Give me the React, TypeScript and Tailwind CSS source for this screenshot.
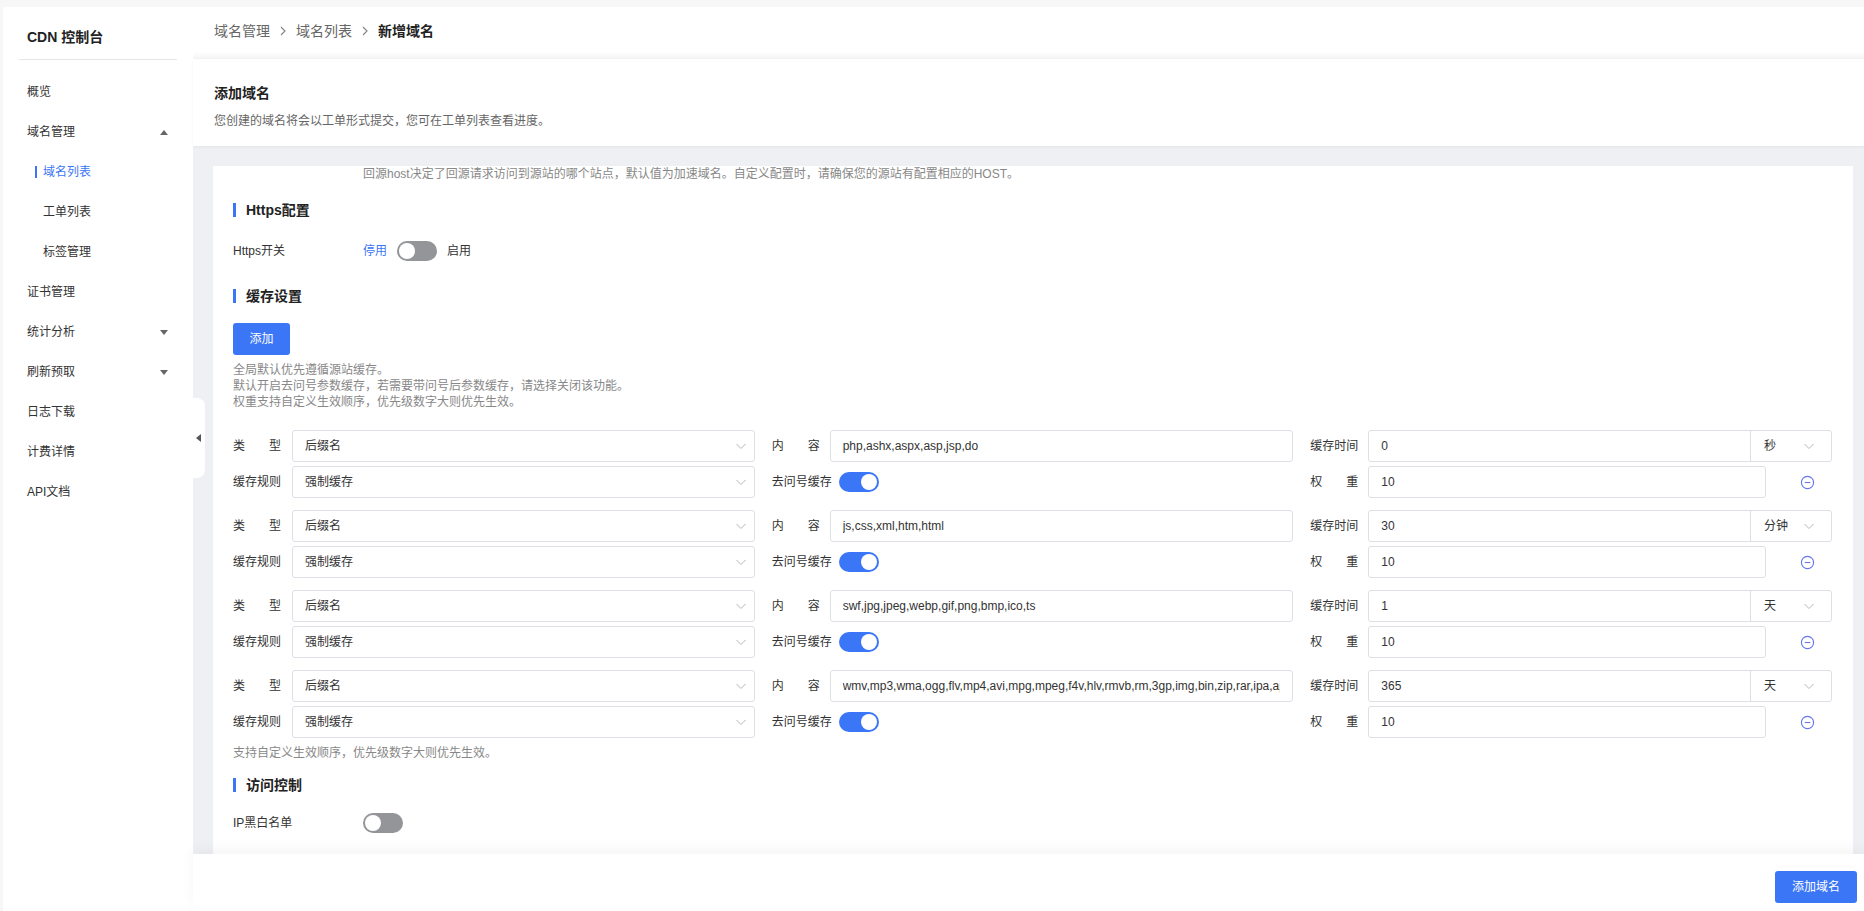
import React from 'react';

const rules = [
  { content: 'php,ashx,aspx,asp,jsp,do', time: '0', unit: '秒' },
  { content: 'js,css,xml,htm,html', time: '30', unit: '分钟' },
  { content: 'swf,jpg,jpeg,webp,gif,png,bmp,ico,ts', time: '1', unit: '天' },
  {
    content:
      'wmv,mp3,wma,ogg,flv,mp4,avi,mpg,mpeg,f4v,hlv,rmvb,rm,3gp,img,bin,zip,rar,ipa,apk,sis,xap,msi,exe,cab,7z,pdf,doc,docx,xls,xlsx,ppt,pptx,txt',
    time: '365',
    unit: '天',
  },
];

const Chevron = () => (
  <svg width="12" height="12" viewBox="0 0 12 12" className="shrink-0">
    <polyline points="1.5,4 6,8.5 10.5,4" fill="none" stroke="#b4b7bd" strokeWidth="1" />
  </svg>
);

const Caret = ({ up }: { up?: boolean }) => (
  <svg width="8" height="5" viewBox="0 0 8 5">
    <polygon points={up ? '0,5 8,5 4,0' : '0,0 8,0 4,5'} fill="#666" />
  </svg>
);

const SplitLabel = ({ a, b }: { a: string; b: string }) => (
  <div className="flex w-[48px] shrink-0 justify-between">
    <span>{a}</span>
    <span>{b}</span>
  </div>
);

const Switch = ({ on }: { on?: boolean }) => (
  <div
    className={
      on
        ? 'flex h-5 w-10 shrink-0 items-center justify-end rounded-full bg-[#3b76f6] px-[2px]'
        : 'flex h-5 w-10 shrink-0 items-center justify-start rounded-full bg-[#939599] px-[2px]'
    }
  >
    <div className="h-4 w-4 rounded-full bg-white" />
  </div>
);

const SelectBox = ({ value }: { value: string }) => (
  <div className="flex h-8 min-w-0 flex-1 items-center justify-between rounded-[3px] border border-[#dcdfe6] pl-3 pr-[7px]">
    <span>{value}</span>
    <Chevron />
  </div>
);

const SectionTitle = ({ text, className }: { text: string; className: string }) => (
  <div className={`flex items-center gap-[10px] ${className}`}>
    <div className="h-[14px] w-[3px] bg-[#3b76f6]" />
    <span className="text-[14px] font-bold leading-4 text-[#222]">{text}</span>
  </div>
);

const RuleGroup = ({ content, time, unit }: { content: string; time: string; unit: string }) => (
  <div className="flex flex-col gap-1">
    <div className="grid grid-cols-3 gap-x-[17px]">
      <div className="flex items-center gap-[11px]">
        <SplitLabel a="类" b="型" />
        <SelectBox value="后缀名" />
      </div>
      <div className="flex items-center gap-[10px]">
        <SplitLabel a="内" b="容" />
        <div className="flex h-8 min-w-0 flex-1 items-center rounded-[3px] border border-[#dcdfe6] px-3">
          <input
            readOnly
            value={content}
            className="w-full min-w-0 bg-transparent text-[12px] text-[#333] outline-none"
          />
        </div>
      </div>
      <div className="flex items-center gap-[10px]">
        <div className="w-[48px] shrink-0 whitespace-nowrap">缓存时间</div>
        <div className="flex h-8 min-w-0 flex-1 items-center rounded-[3px] border border-[#dcdfe6]">
          <div className="flex-1 pl-3">{time}</div>
          <div className="flex h-full w-[81px] items-center justify-between border-l border-[#dcdfe6] pl-[13px] pr-[16px]">
            <span>{unit}</span>
            <Chevron />
          </div>
        </div>
      </div>
    </div>
    <div className="grid grid-cols-3 gap-x-[17px]">
      <div className="flex items-center gap-[11px]">
        <div className="w-[48px] shrink-0 whitespace-nowrap">缓存规则</div>
        <SelectBox value="强制缓存" />
      </div>
      <div className="flex h-8 items-center">
        <div className="w-[60px] shrink-0 whitespace-nowrap">去问号缓存</div>
        <div className="ml-[7px]">
          <Switch on />
        </div>
      </div>
      <div className="flex items-center gap-[10px]">
        <SplitLabel a="权" b="重" />
        <div className="flex h-8 w-[398px] items-center rounded-[3px] border border-[#dcdfe6] pl-3">10</div>
        <svg width="15" height="15" viewBox="0 0 16 16" className="ml-[24px]">
          <circle cx="8" cy="8" r="6.5" fill="none" stroke="#6676ef" strokeWidth="1.2" />
          <line x1="5" y1="8" x2="11" y2="8" stroke="#6676ef" strokeWidth="1.2" />
        </svg>
      </div>
    </div>
  </div>
);

const navItems = [
  { label: '概览' },
  { label: '域名管理', caret: 'up' },
  { label: '域名列表', sub: true, active: true },
  { label: '工单列表', sub: true },
  { label: '标签管理', sub: true },
  { label: '证书管理' },
  { label: '统计分析', caret: 'down' },
  { label: '刷新预取', caret: 'down' },
  { label: '日志下载' },
  { label: '计费详情' },
  { label: 'API文档' },
];

export default function App() {
  return (
    <div className="flex h-[911px] w-full overflow-hidden bg-[#f7f7f7] pl-[3px] pt-[7px] font-['Liberation_Sans','Noto_Sans_CJK_SC',sans-serif] text-[12px] text-[#333]">
      {/* sidebar */}
      <aside className="relative w-[190px] shrink-0 bg-white">
        <div className="flex h-[52px] items-center pl-6 pt-2 text-[14px] font-bold text-[#222]">CDN 控制台</div>
        <div className="mx-4 h-px bg-[#e6e6ea]" />
        <nav className="mt-3 flex flex-col">
          {navItems.map((item) => (
            <div
              key={item.label}
              className={
                item.sub
                  ? 'flex h-10 items-center pl-8 pr-[25px]'
                  : 'flex h-10 items-center justify-between pl-6 pr-[25px]'
              }
            >
              {item.sub ? (
                <>
                  <div className={item.active ? 'h-3 w-[2px] bg-[#3b76f6]' : 'h-3 w-[2px]'} />
                  <span className={item.active ? 'ml-[6px] text-[#3b76f6]' : 'ml-[6px]'}>{item.label}</span>
                </>
              ) : (
                <>
                  <span>{item.label}</span>
                  {item.caret && <Caret up={item.caret === 'up'} />}
                </>
              )}
            </div>
          ))}
        </nav>
        <div className="absolute left-full top-[391px] z-10 flex h-20 w-3 items-center rounded-r-[8px] bg-white pl-[3px]">
          <svg width="5" height="8" viewBox="0 0 5 8">
            <polygon points="5,0 5,8 0,4" fill="#555" />
          </svg>
        </div>
      </aside>

      {/* main */}
      <main className="flex min-w-0 flex-1 flex-col">
        <div className="flex h-[45px] items-center gap-[8px] bg-white pl-[21px] pt-[3px] text-[14px] text-[#666]">
          <span>域名管理</span>
          <svg width="10" height="12" viewBox="0 0 10 12">
            <polyline points="3,2 7,6 3,10" fill="none" stroke="#888" strokeWidth="1.2" />
          </svg>
          <span>域名列表</span>
          <svg width="10" height="12" viewBox="0 0 10 12">
            <polyline points="3,2 7,6 3,10" fill="none" stroke="#888" strokeWidth="1.2" />
          </svg>
          <span className="font-bold text-[#222]">新增域名</span>
        </div>
        <div className="h-[7px] bg-linear-to-b from-white to-[#f3f3f4]" />

        <div className="relative z-[1] h-[87px] bg-white pl-[21px] pt-[26px] shadow-[0_1px_3px_rgba(0,0,0,0.05)]">
          <div className="text-[14px] font-bold leading-4 text-[#222]">添加域名</div>
          <div className="mt-3 leading-4 text-[#666]">您创建的域名将会以工单形式提交，您可在工单列表查看进度。</div>
        </div>

        <div className="min-h-0 flex-1 bg-[#eff0f4] pl-5 pr-[11px] pt-5">
          <div className="h-full overflow-hidden bg-white pl-5 pr-[21px]">
            <div className="pl-[130px] leading-4 text-[#888]">
              回源host决定了回源请求访问到源站的哪个站点，默认值为加速域名。自定义配置时，请确保您的源站有配置相应的HOST。
            </div>

            <SectionTitle text="Https配置" className="mt-[20px]" />

            <div className="mt-[23px] flex h-5 items-center">
              <div className="w-[130px]">Https开关</div>
              <span className="text-[#3b76f6]">停用</span>
              <div className="ml-[10px]">
                <Switch />
              </div>
              <span className="ml-[10px]">启用</span>
            </div>

            <SectionTitle text="缓存设置" className="mt-[27px]" />

            <button className="mt-[19px] flex h-8 w-[57px] items-center justify-center rounded-[3px] bg-[#3b76f6] text-white">
              添加
            </button>

            <div className="mt-[7px] leading-4 text-[#888]">
              <div>全局默认优先遵循源站缓存。</div>
              <div>默认开启去问号参数缓存，若需要带问号后参数缓存，请选择关闭该功能。</div>
              <div>权重支持自定义生效顺序，优先级数字大则优先生效。</div>
            </div>

            <div className="mt-5 flex flex-col gap-3">
              {rules.map((r) => (
                <RuleGroup key={r.content} content={r.content} time={r.time} unit={r.unit} />
              ))}
            </div>

            <div className="mt-[7px] leading-4 text-[#888]">支持自定义生效顺序，优先级数字大则优先生效。</div>

            <SectionTitle text="访问控制" className="mt-4" />

            <div className="mt-[20px] flex h-5 items-center">
              <div className="w-[130px]">IP黑白名单</div>
              <Switch />
            </div>
          </div>
        </div>

        <div className="relative z-[1] flex h-[57px] justify-end bg-white pr-[7px] pt-[17px] shadow-[0_-6px_12px_rgba(0,0,0,0.04)]">
          <button className="flex h-8 w-[82px] items-center justify-center rounded-[3px] bg-[#3b76f6] text-white">
            添加域名
          </button>
        </div>
      </main>
    </div>
  );
}
